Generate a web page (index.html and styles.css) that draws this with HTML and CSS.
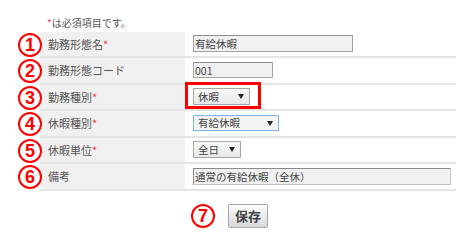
FILE: index.html
```html
<!DOCTYPE html>
<html lang="ja">
<head>
<meta charset="utf-8">
<title>勤務形態</title>
<link rel="stylesheet" href="styles.css">
</head>
<body>
<div class="page">
  <p class="note"><span class="req">*</span>は必須項目です。</p>
  <div class="form">
    <div class="row">
      <span class="marker">1</span>
      <div class="cells">
        <div class="label">勤務形態名<span class="req">*</span></div>
        <div class="value"><input class="field w160" type="text" value="有給休暇" readonly></div>
      </div>
    </div>
    <div class="row">
      <span class="marker">2</span>
      <div class="cells">
        <div class="label">勤務形態コード</div>
        <div class="value"><input class="field w80 h16" type="text" value="001" readonly></div>
      </div>
    </div>
    <div class="row">
      <span class="marker">3</span>
      <div class="cells">
        <div class="label">勤務種別<span class="req">*</span></div>
        <div class="value">
          <div class="select w57"><span>休暇</span><span class="arrow"></span></div>
          <span class="frame"></span>
        </div>
      </div>
    </div>
    <div class="row">
      <span class="marker">4</span>
      <div class="cells">
        <div class="label">休暇種別<span class="req">*</span></div>
        <div class="value"><div class="select focus w86 h16"><span>有給休暇</span><span class="arrow"></span></div></div>
      </div>
    </div>
    <div class="row">
      <span class="marker">5</span>
      <div class="cells">
        <div class="label">休暇単位<span class="req">*</span></div>
        <div class="value"><div class="select w48"><span>全日</span><span class="arrow"></span></div></div>
      </div>
    </div>
    <div class="row">
      <span class="marker">6</span>
      <div class="cells">
        <div class="label">備考</div>
        <div class="value"><input class="field inset w258" type="text" value="通常の有給休暇（全休）" readonly></div>
      </div>
    </div>
  </div>
  <div class="actions">
    <span class="marker">7</span>
    <button class="btn" type="button">保存</button>
  </div>
</div>
</body>
</html>
```

FILE: styles.css
```css
html, body {
  margin: 0;
  padding: 0;
  background: #ffffff;
}

body {
  font-family: "Noto Sans CJK JP", "Noto Sans", sans-serif;
  color: #555555;
}

.note {
  margin: 0 0 2.5px 0;
  padding: 16px 0 0 47px;
  font-size: 10px;
  line-height: 13px;
  color: #555555;
}

.req {
  color: #e53935;
}

.row {
  display: flex;
  align-items: center;
}

.marker {
  flex: none;
  box-sizing: border-box;
  width: 24px;
  height: 24px;
  border: 2px solid #ff0000;
  border-radius: 50%;
  color: #ff0000;
  font-family: "Liberation Sans", Arial, sans-serif;
  font-weight: bold;
  font-size: 18px;
  line-height: 20px;
  text-align: center;
  position: relative;
  z-index: 1;
}

.row .marker {
  margin: 0 -2px 0 18px;
}

.cells {
  flex: none;
  display: grid;
  grid-template-columns: 145px 271px;
  box-sizing: border-box;
  height: 26.5px;
  border-bottom: 2px solid #e4e4e4;
}

.label {
  background: #f0f0f0;
  padding-left: 8px;
  display: flex;
  align-items: center;
  font-size: 11px;
  line-height: 14px;
  color: #555555;
}

.value {
  position: relative;
  padding-left: 8px;
  display: flex;
  align-items: center;
}

.field {
  box-sizing: border-box;
  height: 17px;
  margin: 0;
  padding: 0 1px;
  border: 1px solid #a3a3a3;
  border-top-color: #8f8f8f;
  background: #f0f0f0;
  font-family: "Noto Sans CJK JP", "Noto Sans", sans-serif;
  font-size: 10.5px;
  color: #444444;
  outline: none;
}

.field.inset {
  border-color: #8a8a8a #c4c4c4 #c4c4c4 #8a8a8a;
}

.select {
  box-sizing: border-box;
  height: 17px;
  display: flex;
  align-items: center;
  justify-content: space-between;
  padding: 0 5px 0 4px;
  border: 1px solid #a6a6a6;
  background: linear-gradient(#f8f8f8, #e8e8e8);
  font-size: 10.5px;
  line-height: 14px;
  color: #444444;
}

.select.focus {
  border-color: #7eb4ea;
  background: #f4f4f4;
}

.arrow {
  width: 0;
  height: 0;
  border-left: 3px solid transparent;
  border-right: 3px solid transparent;
  border-top: 5px solid #222222;
}

.w160 { width: 160px; }
.w80 { width: 80px; }
.w57 { width: 57px; }
.w86 { width: 86px; }
.w48 { width: 48px; }
.w258 { width: 258px; }
.h16 { height: 16px; }

.frame {
  position: absolute;
  left: 0;
  top: -2.5px;
  width: 76px;
  height: 27px;
  box-sizing: border-box;
  border: 3px solid #ff0000;
  pointer-events: none;
}

.actions {
  display: flex;
  align-items: center;
  margin-top: 12.5px;
}

.actions .marker {
  margin: 1px 13px 0 191px;
}

.btn {
  box-sizing: border-box;
  width: 40px;
  height: 24px;
  padding: 0;
  border: 1px solid #a5a5a5;
  border-radius: 2px;
  background: linear-gradient(#fbfbfb, #dadada);
  font-family: "Noto Sans CJK JP", "Noto Sans", sans-serif;
  font-weight: bold;
  font-size: 13px;
  line-height: 20px;
  color: #444444;
}
```
